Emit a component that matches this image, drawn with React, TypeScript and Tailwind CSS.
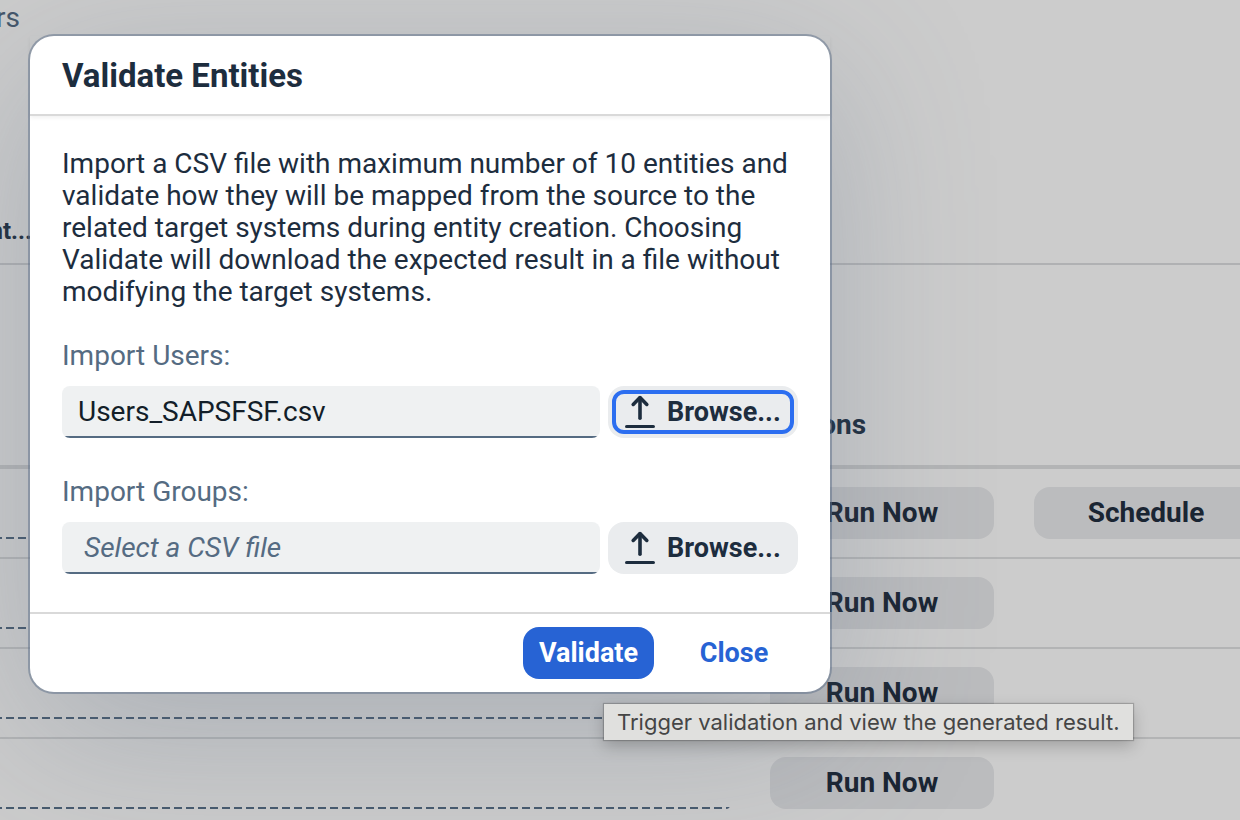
import { useState } from "react";

const rows = [
  { id: 1, schedule: true },
  { id: 2, schedule: false },
  { id: 3, schedule: false },
  { id: 4, schedule: false },
];

function UploadIcon() {
  return (
    <svg
      viewBox="0 0 30 34"
      className="h-[34px] w-[30px] shrink-0"
      fill="none"
      stroke="currentColor"
      strokeLinecap="round"
      strokeLinejoin="round"
      aria-hidden="true"
    >
      <path d="M15 23.2V3" strokeWidth="3.6" />
      <path d="M8.2 9.4L15 2.6L21.8 9.4" strokeWidth="3.6" />
      <path d="M1.6 31.5H28.4" strokeWidth="3.2" />
    </svg>
  );
}

function TableButton({ children }: { children: string }) {
  return (
    <button
      type="button"
      className="block h-[52px] w-[224px] rounded-2xl bg-[#bbbcbe] text-[28px] font-bold text-[#1a2533]"
    >
      {children}
    </button>
  );
}

function FileField({
  id,
  label,
  value,
  onChange,
  placeholder,
  focused,
}: {
  id: string;
  label: string;
  value: string;
  onChange: (value: string) => void;
  placeholder?: string;
  focused?: boolean;
}) {
  return (
    <div>
      <label htmlFor={id} className="block text-[28px] leading-8 text-[#556b82]">
        {label}
      </label>
      <div className="mt-3.5 flex gap-2">
        <input
          id={id}
          type="text"
          value={value}
          placeholder={placeholder}
          onChange={(event) => onChange(event.target.value)}
          className="h-[52px] min-w-0 flex-1 rounded-lg bg-[#eff1f2] bg-[linear-gradient(#556b82,#556b82)] bg-[length:100%_2px] bg-bottom bg-no-repeat px-4 pb-0.5 text-[28px] text-[#131e29] outline-none placeholder:pl-1.5 placeholder:text-[#556b82] placeholder:italic placeholder:opacity-100"
        />
        <button
          type="button"
          className="relative flex h-[52px] w-[190px] items-center gap-3 rounded-2xl bg-[#eaecee] pl-[17px] text-[27px] font-bold text-[#1d2d3e]"
        >
          <UploadIcon />
          Browse...
          {focused && (
            <span className="absolute inset-1 rounded-xl border-4 border-[#2c6ef0]" />
          )}
        </button>
      </div>
    </div>
  );
}

export default function App() {
  const [users, setUsers] = useState("Users_SAPSFSF.csv");
  const [groups, setGroups] = useState("");

  return (
    <div className="relative h-screen overflow-hidden bg-[#cccccc] font-['Roboto','Liberation_Sans',sans-serif] text-[#1d2d3e]">
      <main>
        <div className="flex h-[265px] flex-col justify-between border-b-2 border-[#b0b1b3] pt-0.5 pb-4">
          <span className="flex w-5 justify-end overflow-hidden text-[28px] leading-8 text-[#44566a]">
            rs
          </span>
          <span className="flex w-8 justify-end overflow-hidden text-2xl leading-8 font-bold">
            nt...
          </span>
        </div>
        <table className="w-[1298px] table-fixed border-separate border-spacing-0">
          <colgroup>
            <col className="w-[770px]" />
            <col className="w-[264px]" />
            <col />
          </colgroup>
          <thead>
            <tr className="h-[204px]">
              <th className="border-b-4 border-[#b3b4b5]" aria-label="Value" />
              <th
                colSpan={2}
                className="border-b-4 border-[#b3b4b5] p-0 pb-6 text-left align-bottom text-[28px] leading-8 font-bold"
              >
                Actions
              </th>
            </tr>
          </thead>
          <tbody>
            {rows.map((row) => (
              <tr key={row.id} className="h-[90px]">
                <td className="border-b-2 border-[#b3b4b5] p-0 pr-10">
                  <div className="-ml-2.5">
                    <input
                      type="text"
                      readOnly
                      aria-label={`Value ${row.id}`}
                      className="block h-[52px] w-full rounded-sm bg-[linear-gradient(90deg,#475a6e_8px,transparent_8px)] bg-[length:12px_2px] bg-[position:4px_100%] bg-repeat-x outline-none"
                    />
                  </div>
                </td>
                <td className="border-b-2 border-[#b3b4b5] p-0">
                  <TableButton>Run Now</TableButton>
                </td>
                <td className="border-b-2 border-[#b3b4b5] p-0">
                  {row.schedule && <TableButton>Schedule</TableButton>}
                </td>
              </tr>
            ))}
          </tbody>
        </table>
      </main>

      <section
        role="dialog"
        aria-labelledby="dialog-title"
        className="absolute top-9 left-[30px] w-[800px] rounded-3xl bg-white shadow-[0_0_0_2px_rgba(91,110,135,0.5),0_40px_160px_rgba(91,107,130,0.3)]"
      >
        <header className="border-b-2 border-[#d9d9d9] px-8 pt-5 pb-[18px] shadow-[0_2px_4px_rgba(0,0,0,0.06)]">
          <h1 id="dialog-title" className="text-[33px] leading-10 font-bold">
            Validate Entities
          </h1>
        </header>
        <div className="px-8 pt-8 pb-[38px]">
          <p className="mb-8 text-[28px] leading-8">
            Import a CSV file with maximum number of 10 entities and validate how they will be
            mapped from the source to the related target systems during entity creation. Choosing
            Validate will download the expected result in a file without modifying the target
            systems.
          </p>
          <div className="flex flex-col gap-[38px]">
            <FileField
              id="users-file"
              label="Import Users:"
              value={users}
              onChange={setUsers}
              focused
            />
            <FileField
              id="groups-file"
              label="Import Groups:"
              value={groups}
              onChange={setGroups}
              placeholder="Select a CSV file"
            />
          </div>
        </div>
        <footer className="flex h-20 items-center justify-end gap-4 border-t-2 border-[#d9d9d9] px-8">
          <button
            type="button"
            aria-describedby="validate-tip"
            className="h-[52px] w-[131px] rounded-2xl bg-[#2763d4] text-[27px] font-bold text-white"
          >
            Validate
          </button>
          <button
            type="button"
            className="h-[52px] w-32 rounded-2xl text-[27px] font-bold text-[#2763d4]"
          >
            Close
          </button>
        </footer>
      </section>

      <div
        id="validate-tip"
        role="tooltip"
        className="absolute top-[704px] left-[604px] bg-[#e0e0de] px-[13px] py-1 font-['Inter',sans-serif] text-[22px] leading-7 whitespace-nowrap text-[#454545] shadow-[0_0_1px_1px_rgba(0,0,0,0.2),0_6px_16px_rgba(0,0,0,0.22)]"
      >
        Trigger validation and view the generated result.
      </div>
    </div>
  );
}
